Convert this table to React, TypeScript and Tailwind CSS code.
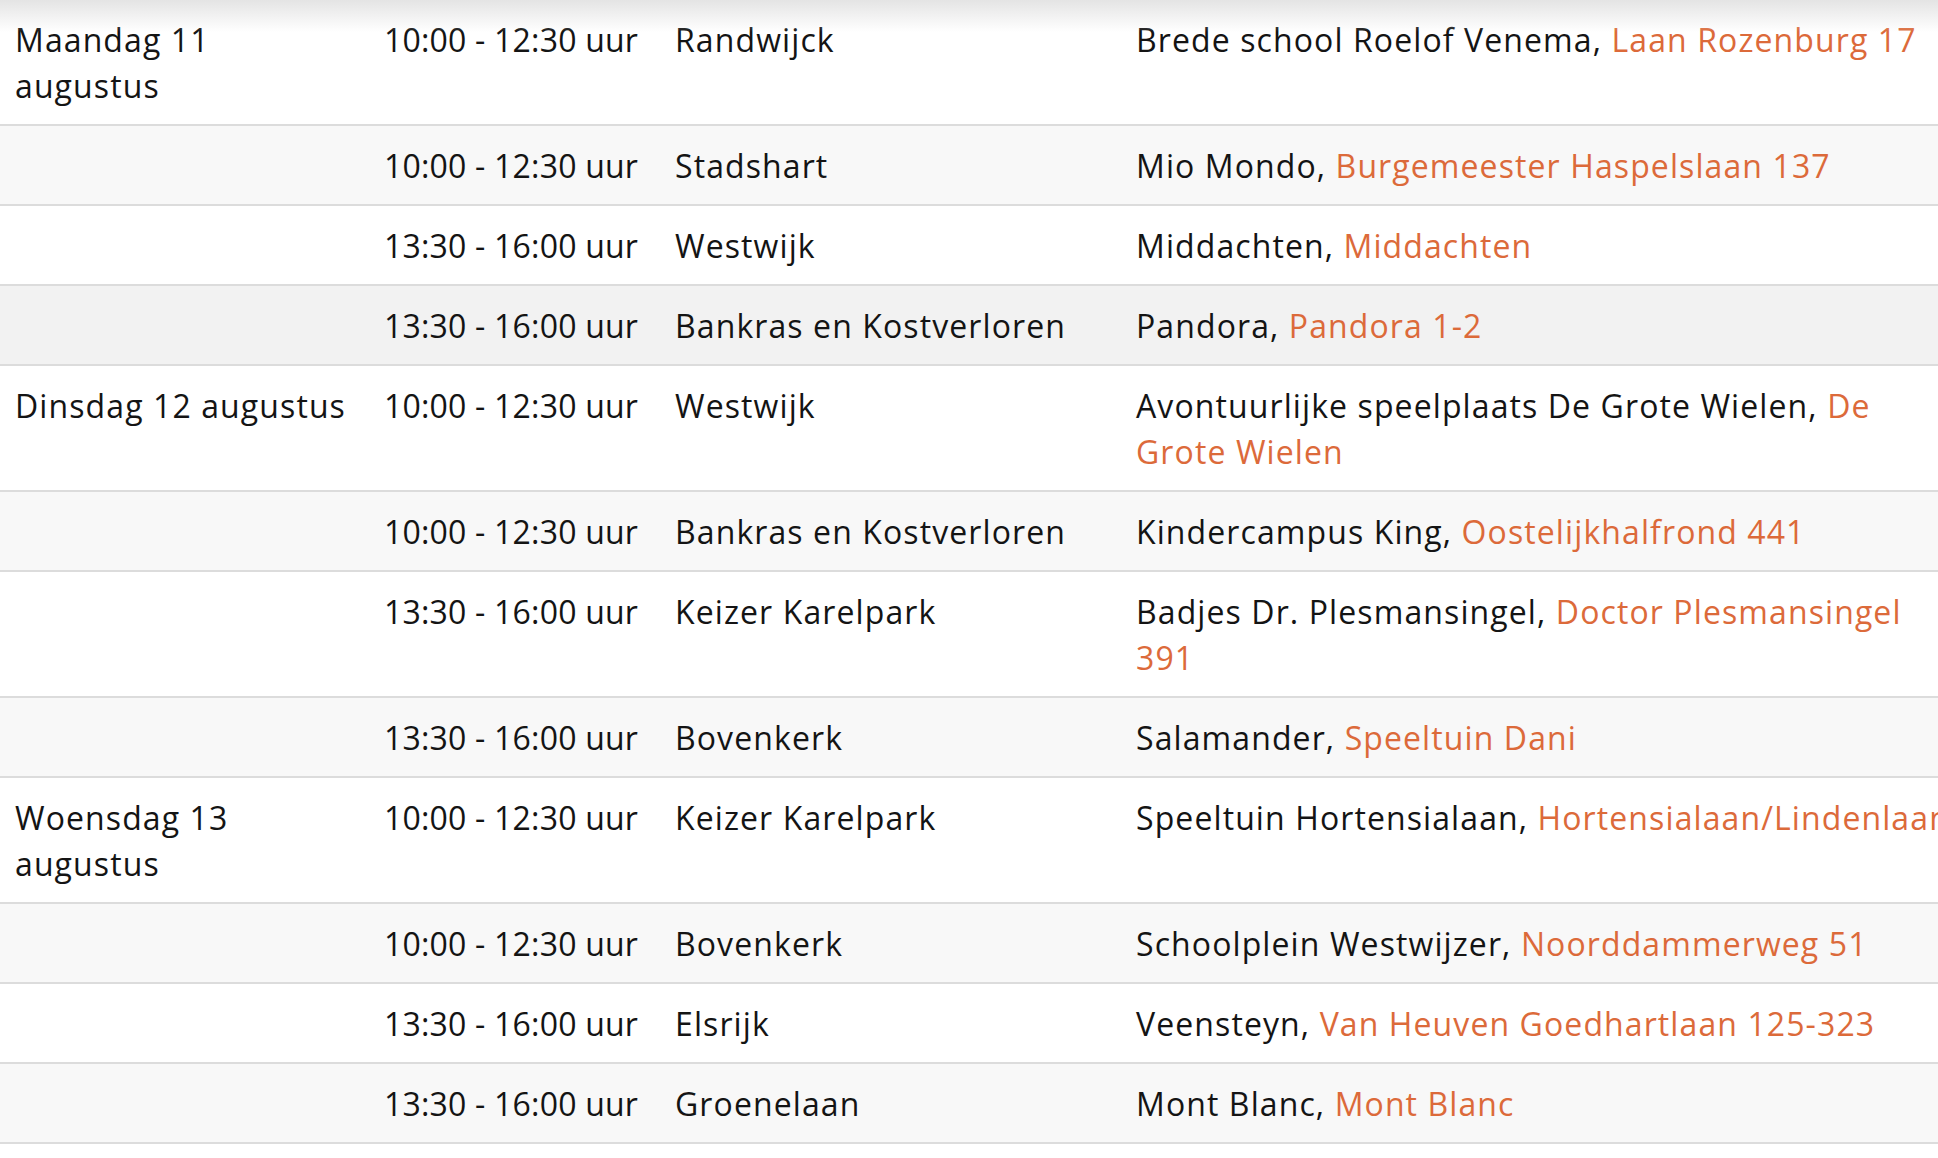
import React from "react";

type Row = {
  date?: string[];
  time: string;
  area: string;
  place: string;
  addr: string[];
  bg: string;
};

const rows: Row[] = [
  { date: ["Maandag 11", "augustus"], time: "10:00 - 12:30 uur", area: "Randwijck", place: "Brede school Roelof Venema, ", addr: ["Laan Rozenburg 17"], bg: "bg-white" },
  { time: "10:00 - 12:30 uur", area: "Stadshart", place: "Mio Mondo, ", addr: ["Burgemeester Haspelslaan 137"], bg: "bg-[#f8f8f8]" },
  { time: "13:30 - 16:00 uur", area: "Westwijk", place: "Middachten, ", addr: ["Middachten"], bg: "bg-white" },
  { time: "13:30 - 16:00 uur", area: "Bankras en Kostverloren", place: "Pandora, ", addr: ["Pandora 1-2"], bg: "bg-[#f2f2f2]" },
  { date: ["Dinsdag 12 augustus"], time: "10:00 - 12:30 uur", area: "Westwijk", place: "Avontuurlijke speelplaats De Grote Wielen, ", addr: ["De", "Grote Wielen"], bg: "bg-white" },
  { time: "10:00 - 12:30 uur", area: "Bankras en Kostverloren", place: "Kindercampus King, ", addr: ["Oostelijkhalfrond 441"], bg: "bg-[#f8f8f8]" },
  { time: "13:30 - 16:00 uur", area: "Keizer Karelpark", place: "Badjes Dr. Plesmansingel, ", addr: ["Doctor Plesmansingel", "391"], bg: "bg-white" },
  { time: "13:30 - 16:00 uur", area: "Bovenkerk", place: "Salamander, ", addr: ["Speeltuin Dani"], bg: "bg-[#f8f8f8]" },
  { date: ["Woensdag 13", "augustus"], time: "10:00 - 12:30 uur", area: "Keizer Karelpark", place: "Speeltuin Hortensialaan, ", addr: ["Hortensialaan/Lindenlaan"], bg: "bg-white" },
  { time: "10:00 - 12:30 uur", area: "Bovenkerk", place: "Schoolplein Westwijzer, ", addr: ["Noorddammerweg 51"], bg: "bg-[#f8f8f8]" },
  { time: "13:30 - 16:00 uur", area: "Elsrijk", place: "Veensteyn, ", addr: ["Van Heuven Goedhartlaan 125-323"], bg: "bg-white" },
  { time: "13:30 - 16:00 uur", area: "Groenelaan", place: "Mont Blanc, ", addr: ["Mont Blanc"], bg: "bg-[#f8f8f8]" },
];

export default function App() {
  return (
    <div
      className="relative w-full h-[1158px] overflow-hidden bg-white text-[#141414] text-[32px] leading-[46px] tracking-[1.1px]"
      style={{ fontFamily: '"Open Sans", "Noto Sans", sans-serif' }}
    >
      <div className="flex flex-col w-full">
        {rows.map((r, i) => (
          <div
            key={i}
            className={`grid grid-cols-[369px_291px_461px_1fr] border-b-2 border-[#dcdcdc] ${r.bg}`}
          >
            <div className="px-[15px] pt-[17px] pb-[15px]">
              {r.date ? r.date.map((d, j) => <div key={j}>{d}</div>) : null}
            </div>
            <div className="px-[15px] pt-[17px] pb-[15px] whitespace-nowrap tracking-[0.2px]">{r.time}</div>
            <div className="px-[15px] pt-[17px] pb-[15px] whitespace-nowrap">{r.area}</div>
            <div className="px-[15px] pt-[17px] pb-[15px] whitespace-nowrap">
              <span>{r.place}</span>
              <span className="text-[#dc6a3a]">{r.addr[0]}</span>
              {r.addr.slice(1).map((a, j) => (
                <div key={j} className="text-[#dc6a3a]">{a}</div>
              ))}
            </div>
          </div>
        ))}
      </div>
      <div className="pointer-events-none absolute inset-x-0 top-0 h-[32px] bg-gradient-to-b from-[#e4e4e4] to-transparent" />
    </div>
  );
}
